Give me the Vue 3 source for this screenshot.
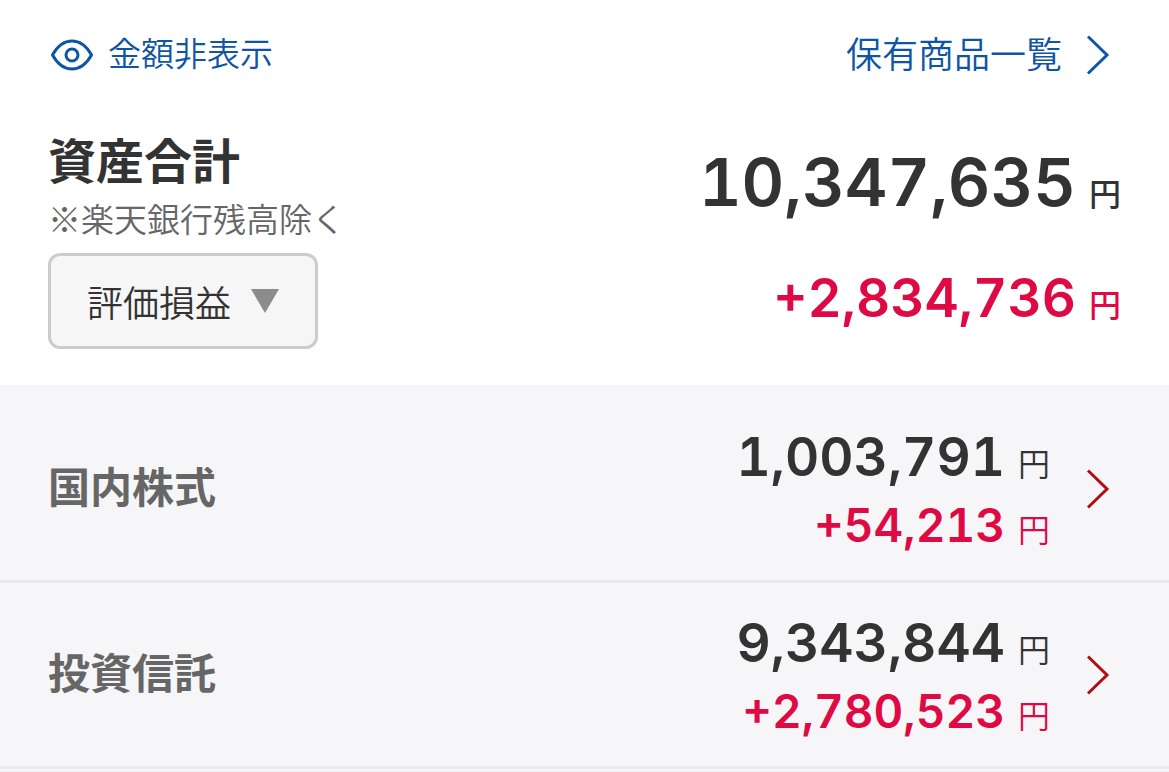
<script setup>
const holdings = [
  { name: '国内株式', value: '1,003,791', gain: '+54,213' },
  { name: '投資信託', value: '9,343,844', gain: '+2,780,523' },
]
</script>

<template>
  <main class="page">
    <section class="summary">
      <div class="actions">
        <button type="button" class="toggle">
          <svg class="eye" viewBox="0 0 42 32" aria-hidden="true">
            <path d="M1.500 16C6.500 7 13 2 21 2s14.500 5 19.500 14C35.500 25 29 30 21 30S6.500 25 1.500 16z" />
            <circle cx="21" cy="16" r="6" />
          </svg>
          <span class="label">金額非表示</span>
        </button>
        <a href="#holdings" class="all-link">
          <span class="label">保有商品一覧</span>
          <svg class="chevron" viewBox="0 0 24 40" aria-hidden="true"><path d="M2 1.500L21 20L2 38.500" /></svg>
        </a>
      </div>
      <div class="total">
        <div class="total-label">
          <h1>資産合計</h1>
          <p class="note">※楽天銀行残高除く</p>
          <button type="button" class="metric">
            <span>評価損益</span>
            <svg class="triangle" viewBox="0 0 28 24" aria-hidden="true"><path d="M0 0h28L14 24z" /></svg>
          </button>
        </div>
        <div class="total-amounts">
          <p class="amount grand"><span class="num">10,347,635</span><span class="yen">円</span></p>
          <p class="amount value gain"><span class="num">+2,834,736</span><span class="yen">円</span></p>
        </div>
      </div>
    </section>
    <ul id="holdings" class="holdings">
      <li v-for="h in holdings" :key="h.name">
        <a href="#" class="row">
          <h2>{{ h.name }}</h2>
          <div class="row-amounts">
            <p class="amount value"><span class="num">{{ h.value }}</span><span class="yen">円</span></p>
            <p class="amount delta gain"><span class="num">{{ h.gain }}</span><span class="yen">円</span></p>
          </div>
          <svg class="chevron" viewBox="0 0 24 40" aria-hidden="true"><path d="M2 1.500L21 20L2 38.500" /></svg>
        </a>
      </li>
    </ul>
  </main>
</template>

<style>
body {
  margin: 0;
  background: #f6f6f9;
}
</style>

<style scoped>
.page {
  font-family: "Noto Sans CJK JP", sans-serif;
  font-weight: 350;
  color: #333;
}
h1, h2, p, ul {
  margin: 0;
  padding: 0;
}
ul {
  list-style: none;
}
a {
  color: inherit;
  text-decoration: none;
}
button {
  font: inherit;
  cursor: pointer;
}
svg {
  display: block;
  flex: none;
  fill: none;
}
.summary {
  padding: 28px 48px 36px;
  background: #fff;
}
.actions {
  display: flex;
  justify-content: space-between;
  align-items: center;
  height: 54px;
  color: #0f55a5;
}
.toggle {
  display: flex;
  align-items: center;
  gap: 15px;
  padding: 0 3px;
  border: 0;
  background: none;
  color: inherit;
  font-size: 33px;
  line-height: 48px;
}
.label {
  padding-bottom: 6px;
}
.eye {
  width: 42px;
  height: 32px;
  stroke: currentColor;
  stroke-width: 3;
}
.all-link {
  display: flex;
  align-items: center;
  gap: 24px;
  padding-right: 11px;
  font-size: 36px;
  line-height: 48px;
}
.chevron {
  width: 24px;
  height: 40px;
  stroke: currentColor;
  stroke-width: 3;
}
.total {
  display: flex;
  justify-content: space-between;
  padding-top: 40px;
}
h1 {
  font-size: 48px;
  line-height: 72px;
  font-weight: 700;
}
.note {
  font-size: 33px;
  line-height: 48px;
  color: #666;
}
.metric {
  display: flex;
  align-items: center;
  gap: 20px;
  height: 96px;
  margin-top: 11px;
  padding: 0 36px;
  border: 3px solid #ccc;
  border-radius: 12px;
  background: #f6f6f6;
  color: #333;
  font-size: 36px;
}
.triangle {
  width: 28px;
  height: 24px;
  fill: #8c8c8c;
}
.amount {
  display: flex;
  justify-content: flex-end;
  align-items: baseline;
  gap: 13px;
  white-space: nowrap;
}
.num {
  font-family: Inter, sans-serif;
  font-weight: 600;
  font-variant-numeric: tabular-nums;
}
.yen {
  font-size: 32px;
  line-height: 1;
}
.total-amounts .yen {
  font-weight: 500;
}
.total-amounts {
  padding-top: 2px;
}
.grand {
  font-size: 66px;
  line-height: 116px;
}
.value {
  font-size: 53px;
  line-height: 72px;
}
.delta {
  font-size: 46px;
  line-height: 64px;
}
.gain {
  color: #df0a43;
}
.total-amounts .gain {
  padding-top: 22px;
}
.holdings {
  padding-top: 12px;
  background: #f6f6f9;
}
.row {
  display: grid;
  grid-template-columns: 1fr auto 24px;
  align-items: center;
  column-gap: 36px;
  height: 183px;
  padding: 0 59px 0 48px;
  border-bottom: 3px solid #e9e9eb;
}
.row .chevron {
  color: #b00c12;
}
h2 {
  padding-bottom: 8px;
  font-size: 42px;
  line-height: 60px;
  font-weight: 700;
  color: #666;
}
</style>
